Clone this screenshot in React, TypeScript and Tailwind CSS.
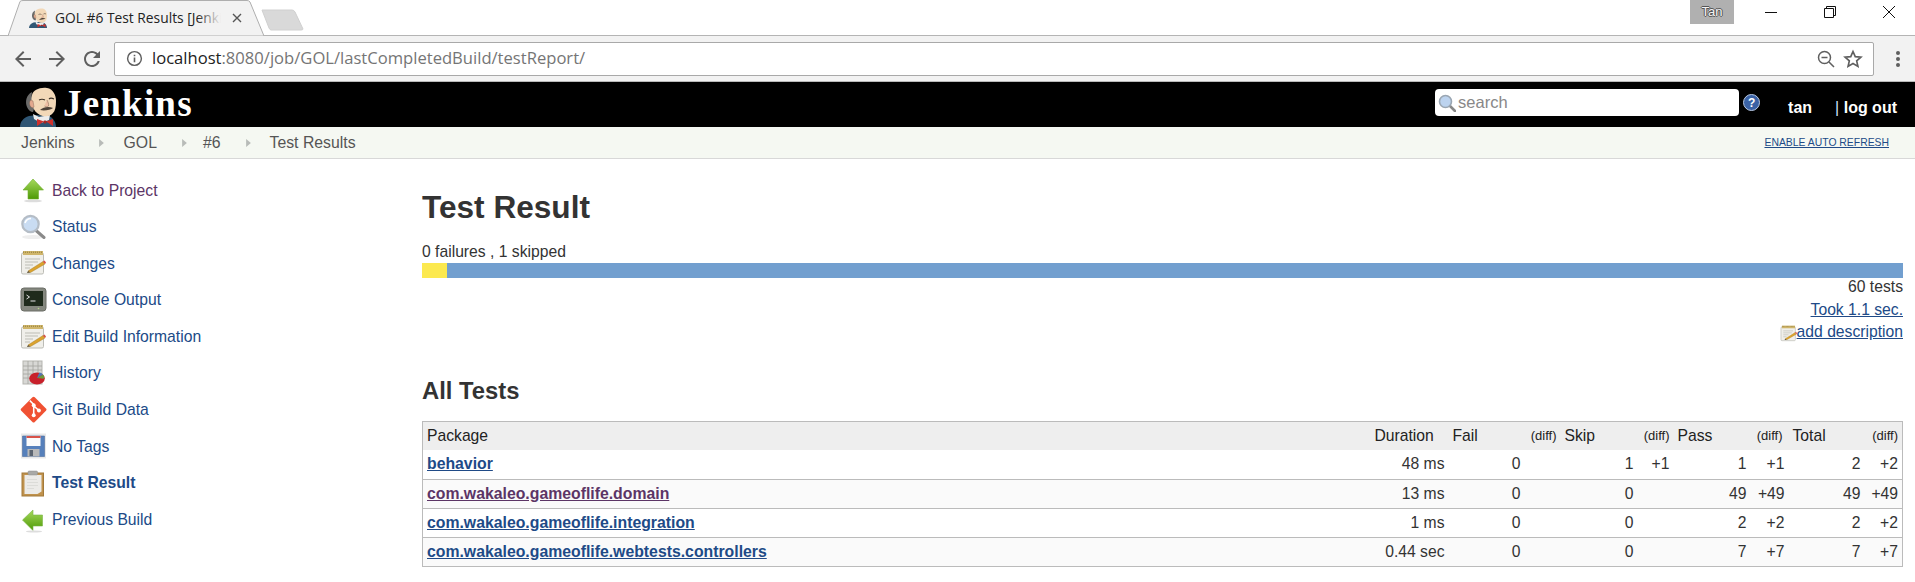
import React from "react";

const Butler = ({ className }: { className: string }) => (
  <svg viewBox="0 0 38 40" className={className}>
    <path d="M0 40c0-5 3-9 9-11l8-1 12 1c4 2 7 6 7 11z" fill="#2f5674" />
    <path d="M13 27l6 3 11-2-1 5-8 3-7-4z" fill="#ececec" />
    <path d="M12 5C6 8 5 15 7 20c1 3 4 5 6 5l2-6C12 15 11 9 12 5z" fill="#6b6b6a" />
    <path d="M12 8C13 3 20 0 27 1c6 1 9 7 9 13 0 6-1 10-3 12-3 4-9 4-13 2-4-2-6-5-7-8-2-4-2-8-1-12z" fill="#f2d8b8" />
    <path d="M11 13c-2 1-2 5 0 7 1 1 2 1 3 0l-1-6z" fill="#e3a98f" stroke="#7a5a48" strokeWidth="0.4" />
    <path d="M19 13c2-1 4-1 6 0M29 12c1-1 3-1 5 0" stroke="#3a3028" strokeWidth="1.1" fill="none" />
    <path d="M27 13c1 2 2 4 1.5 6-1 1-3 1-4 0" fill="#eebfa4" stroke="#7a5a48" strokeWidth="0.5" />
    <path d="M20 23c3-3 9-4 13-2-2 2-9 3-13 2z" fill="#4e4238" />
    <path d="M17 32l7 2.5-7 4.5zM33 32l-7 2.5 7 4.500z" fill="#d0302c" />
    <rect x="23.5" y="33.5" width="3" height="3" rx="1" fill="#a82420" />
  </svg>
);

const ArrowUp = () => (
  <svg viewBox="0 0 26 26" className="w-[26px] h-[26px]">
    <defs><linearGradient id="au" x1="0" y1="0" x2="0" y2="1"><stop offset="0" stopColor="#a6d95c" /><stop offset="1" stopColor="#4e9a06" /></linearGradient></defs>
    <path d="M13 2L23.5 13H18.5V22H8V13H3z" fill="url(#au)" stroke="#6fae2c" strokeWidth="0.6" />
    <ellipse cx="13" cy="24" rx="9" ry="1.3" fill="#ddd" />
  </svg>
);
const ArrowLeft = () => (
  <svg viewBox="0 0 26 26" className="w-[26px] h-[26px]">
    <defs><linearGradient id="al" x1="0" y1="0" x2="0" y2="1"><stop offset="0" stopColor="#a6d95c" /><stop offset="1" stopColor="#4e9a06" /></linearGradient></defs>
    <path d="M2.5 13L13 3V8H22.5V19H13V23.5z" fill="url(#al)" stroke="#7ab648" strokeWidth="0.6" />
    <ellipse cx="14" cy="24.5" rx="8" ry="1.1" fill="#ddd" />
  </svg>
);
const Magnifier = () => (
  <svg viewBox="0 0 26 26" className="w-[26px] h-[26px]">
    <ellipse cx="13" cy="23" rx="11" ry="2" fill="#eee" />
    <path d="M16 16.5L24 23.5" stroke="#8a8a8a" strokeWidth="3" strokeLinecap="round" />
    <circle cx="10.5" cy="10" r="8.2" fill="#c9dcf2" stroke="#b5bdc6" strokeWidth="2.2" />
    <path d="M5 9c1-3 3-4.5 6-4.5" stroke="#fff" strokeWidth="1.6" fill="none" />
  </svg>
);
const Notepad = ({ className = "w-[26px] h-[26px]" }: { className?: string }) => (
  <svg viewBox="0 0 26 26" className={className}>
    <rect x="1.5" y="3" width="22" height="21" rx="1.5" fill="#f0efea" stroke="#bcbcb6" />
    <rect x="3" y="1" width="20" height="4" fill="#cfb56a" />
    <path d="M3 2.2h20" stroke="#8d7a3c" strokeDasharray="1 1" />
    <path d="M5 9h15M5 12h13M5 15h8M5 18h5" stroke="#bdbdb5" />
    <path d="M8 21L23 11.5l2 2.5L10.5 22.5z" fill="#dba32e" stroke="#9b7420" strokeWidth="0.4" />
    <path d="M23 11.5l2 2.5 1-1.5-1.5-2z" fill="#d9534a" />
    <path d="M8 21l2.5 1.5L7 23z" fill="#5c4a2a" />
  </svg>
);
const Terminal = () => (
  <svg viewBox="0 0 26 26" className="w-[27px] h-[26px]">
    <rect x="0.5" y="1" width="25" height="23" rx="3" fill="#85887f" stroke="#6b6d66" />
    <rect x="3.5" y="4" width="19" height="15" fill="#1f2b1c" />
    <path d="M6 8l3 2-3 2" stroke="#e8e8e8" strokeWidth="1" fill="none" />
    <path d="M10 14h5" stroke="#e8e8e8" />
    <circle cx="18" cy="21.5" r="0.8" fill="#b5d68a" />
  </svg>
);
const History = () => (
  <svg viewBox="0 0 26 26" className="w-[26px] h-[26px]">
    <rect x="3" y="1" width="19" height="23" fill="#d8d8d5" stroke="#b5b5b0" />
    <path d="M3 6h19M3 10h19M3 14h19M3 18h19M8 1v23M13 1v23M18 1v12" stroke="#a3a3a0" strokeWidth="0.8" />
    <ellipse cx="17" cy="18.5" rx="7.8" ry="6" fill="#c8202a" />
    <path d="M17 18l6-3.5c1.5 1.5 1.5 3 .8 4.2z" fill="#6e9a3c" />
    <path d="M17 18l6-3.5c-1-1-2-1.6-3.6-1.9z" fill="#4f79b5" />
  </svg>
);
const Git = () => (
  <svg viewBox="0 0 26 26" className="w-[27px] h-[27px]">
    <path d="M12 1.2a1.6 1.6 0 0 1 2.2 0L25 12a1.6 1.6 0 0 1 0 2.2L14.2 25a1.6 1.6 0 0 1-2.2 0L1.2 14.2a1.6 1.6 0 0 1 0-2.2z" fill="#f05133" />
    <path d="M9.5 4.5l3.7 3.7v10M13.2 9.5l5 4.5" stroke="#fff" strokeWidth="1.5" fill="none" />
    <circle cx="13.2" cy="9" r="1.9" fill="#fff" />
    <circle cx="18.2" cy="14" r="1.9" fill="#fff" />
    <circle cx="13.2" cy="18.5" r="1.9" fill="#fff" />
  </svg>
);
const Floppy = () => (
  <svg viewBox="0 0 26 26" className="w-[27px] h-[26px]">
    <rect x="0.5" y="0.5" width="25" height="25" fill="#e9e9e9" />
    <path d="M2 3h22v20.5H2z" fill="#5680bb" stroke="#4a6c9e" strokeWidth="0.6" />
    <rect x="6" y="3" width="14" height="10" fill="#fbfbfb" />
    <rect x="6" y="3" width="14" height="2" fill="#d8534a" />
    <rect x="7" y="16" width="12" height="7.5" fill="#b9b9b9" />
    <rect x="9" y="17" width="3.5" height="6" fill="#5b6470" />
  </svg>
);
const Clipboard = () => (
  <svg viewBox="0 0 26 26" className="w-[26px] h-[27px]">
    <rect x="2" y="2.5" width="21.5" height="23" fill="#c0924d" stroke="#a37a3a" />
    <path d="M4.5 4.5h17v16.5l-4 2.5h-13z" fill="#ecebe8" />
    <path d="M7 9h10M7 12h11M7 15h11M7 18h7" stroke="#dcdcd8" />
    <rect x="8" y="0.5" width="9.5" height="4" rx="1" fill="#a9a9a6" stroke="#8e8e8c" strokeWidth="0.5" />
  </svg>
);

const LINK = "text-[#204a87]";

const nav: { label: string; icon: React.ReactNode; cls?: string }[] = [
  { label: "Back to Project", icon: <ArrowUp />, cls: "text-[#5c3566]" },
  { label: "Status", icon: <Magnifier /> },
  { label: "Changes", icon: <Notepad /> },
  { label: "Console Output", icon: <Terminal /> },
  { label: "Edit Build Information", icon: <Notepad /> },
  { label: "History", icon: <History /> },
  { label: "Git Build Data", icon: <Git /> },
  { label: "No Tags", icon: <Floppy /> },
  { label: "Test Result", icon: <Clipboard />, cls: "font-bold" },
  { label: "Previous Build", icon: <ArrowLeft /> },
];

const rows = [
  { name: "behavior", dur: "48 ms", fail: "0", skip: "1", skipD: "+1", pass: "1", passD: "+1", total: "2", totalD: "+2" },
  { name: "com.wakaleo.gameoflife.domain", dur: "13 ms", fail: "0", skip: "0", skipD: "", pass: "49", passD: "+49", total: "49", totalD: "+49", visited: true, alt: true },
  { name: "com.wakaleo.gameoflife.integration", dur: "1 ms", fail: "0", skip: "0", skipD: "", pass: "2", passD: "+2", total: "2", totalD: "+2" },
  { name: "com.wakaleo.gameoflife.webtests.controllers", dur: "0.44 sec", fail: "0", skip: "0", skipD: "", pass: "7", passD: "+7", total: "7", totalD: "+7", alt: true },
];

const Th = ({ children }: { children: React.ReactNode }) => (
  <th className="font-normal text-left px-[4px] text-[#222]">{children}</th>
);
const Diff = ({ wide }: { wide?: boolean }) => (
  <th className={wide ? "font-normal text-right pl-[2px] pr-[6px] text-[13px] text-[#222]" : "font-normal text-right px-[4px] text-[13px] text-[#222]"}>(diff)</th>
);
const Td = ({ children }: { children?: React.ReactNode }) => (
  <td className="text-right px-[4px] text-[#333]">{children}</td>
);

const Crumb = () => (
  <svg viewBox="0 0 6 10" className="w-[5px] h-[8px] shrink-0"><path d="M0 0l6 5-6 5z" fill="#b8bbb8" /></svg>
);

export default function App() {
  return (
    <div className="w-[1915px] h-[582px] overflow-hidden bg-white font-['Liberation_Sans',Arial,sans-serif] text-[15.7px] text-[#333]">
      {/* tab strip */}
      <div className="h-[36px] border-b border-[#b4b4b4] flex items-stretch relative">
        <div className="relative ml-[8px] w-[256px] h-[36px] flex items-center pl-[21px] shrink-0">
          <svg viewBox="0 0 256 36" className="absolute inset-0 w-[256px] h-[36px]">
            <path d="M0 36L12 1.5Q13 .5 15 .5H239Q241 .5 242 2L256 36z" fill="#f2f2f2" stroke="#aeaeae" />
          </svg>
          <Butler className="relative w-[19px] h-[20px] shrink-0" />
          <div className="relative ml-[7px] w-[166px] overflow-hidden whitespace-nowrap font-['Open_Sans',sans-serif] text-[13.8px] text-[#222]">
            GOL #6 Test Results [Jenkins]
            <div className="absolute right-0 top-0 bottom-0 w-[24px] bg-gradient-to-r from-transparent to-[#f2f2f2]" />
          </div>
          <svg viewBox="0 0 10 10" className="relative ml-[11px] w-[10px] h-[10px]"><path d="M1 1l8 8M9 1l-8 8" stroke="#555" strokeWidth="1.4" /></svg>
        </div>
        <svg viewBox="0 0 44 22" className="ml-[-3px] mt-[9px] w-[44px] h-[22px] shrink-0">
          <path d="M1 1H31Q33 1 34 3L42 20Q42 21 40 21H10Q9 21 8 19z" fill="#d9d9d9" stroke="#d0d0d0" />
        </svg>
        <div className="flex-1" />
        <div className="w-[44px] h-[24px] bg-[#b0b0b0] text-[#f4f4f4] text-[13px] flex items-center justify-center font-['Liberation_Sans',sans-serif] [text-shadow:1px_0_0_#555,-1px_0_0_#555,0_1px_0_#555,0_-1px_0_#555]">Tan</div>
        <div className="w-[181px] h-[24px] flex items-center pl-[31px] shrink-0">
          <svg viewBox="0 0 12 12" className="w-[12px] h-[12px]"><path d="M0 6.5h12" stroke="#111" /></svg>
          <svg viewBox="0 0 12 12" className="ml-[47px] w-[12px] h-[12px]"><path d="M.5 2.5h9v9h-9zM2.5 2.5v-2h9v9h-2" fill="none" stroke="#111" /></svg>
          <svg viewBox="0 0 12 12" className="ml-[47px] w-[12px] h-[12px]"><path d="M0 0l12 12M12 0L0 12" stroke="#111" /></svg>
        </div>
      </div>

      {/* toolbar */}
      <div className="h-[46px] bg-[#f2f2f2] border-b border-[#b9b9b9] flex items-center">
        <svg viewBox="0 0 24 24" className="ml-[11px] w-[24px] h-[24px]"><path fill="#5f5f5f" d="M20 11H7.83l5.59-5.59L12 4l-8 8 8 8 1.41-1.41L7.83 13H20v-2z" /></svg>
        <svg viewBox="0 0 24 24" className="ml-[10px] w-[24px] h-[24px] rotate-180"><path fill="#5f5f5f" d="M20 11H7.83l5.59-5.59L12 4l-8 8 8 8 1.41-1.41L7.83 13H20v-2z" /></svg>
        <svg viewBox="0 0 24 24" className="ml-[11px] w-[24px] h-[24px]"><path fill="#5f5f5f" d="M17.65 6.35C16.2 4.9 14.21 4 12 4c-4.42 0-7.99 3.58-7.99 8s3.57 8 7.99 8c3.73 0 6.84-2.55 7.73-6h-2.08c-.82 2.33-3.04 4-5.65 4-3.31 0-6-2.69-6-6s2.69-6 6-6c1.66 0 3.14.69 4.22 1.78L13 11h7V4l-2.35 2.35z" /></svg>
        <div className="ml-[10px] w-[1760px] h-[34px] bg-white border border-[#a9a9a9] rounded-[2px] flex items-center pl-[11px] pr-[10px] font-['Open_Sans',sans-serif]">
          <svg viewBox="0 0 18 18" className="w-[17px] h-[17px] shrink-0"><circle cx="9" cy="9" r="7.3" fill="none" stroke="#5f5f5f" strokeWidth="1.5" /><path d="M9 8v5M9 5v1.6" stroke="#5f5f5f" strokeWidth="1.7" /></svg>
          <span className="ml-[9px] text-[16.6px] text-[#222]">localhost<span className="text-[#757575]">:8080/job/GOL/lastCompletedBuild/testReport/</span></span>
          <div className="flex-1" />
          <svg viewBox="0 0 18 18" className="w-[18px] h-[18px]"><circle cx="7.5" cy="7.5" r="6" fill="none" stroke="#5f5f5f" strokeWidth="1.5" /><path d="M4.5 7.5h6M12 12l5 5" stroke="#5f5f5f" strokeWidth="1.5" /></svg>
          <svg viewBox="0 0 24 24" className="ml-[8px] w-[20px] h-[20px]"><path d="M12 3l2.7 6.2 6.8.6-5.1 4.5 1.5 6.6L12 17.4l-5.9 3.5 1.5-6.6L2.5 9.8l6.8-.6z" fill="none" stroke="#5f5f5f" strokeWidth="2" /></svg>
        </div>
        <svg viewBox="0 0 4 16" className="ml-[22px] w-[4px] h-[16px]"><circle cx="2" cy="2" r="2" fill="#5f5f5f" /><circle cx="2" cy="8" r="2" fill="#5f5f5f" /><circle cx="2" cy="14" r="2" fill="#5f5f5f" /></svg>
      </div>

      {/* Jenkins header */}
      <div className="h-[45px] bg-black flex items-end">
        <Butler className="ml-[20px] w-[38px] h-[40px] shrink-0" />
        <div className="self-center ml-[5px] mt-[-2px] font-['Liberation_Serif',serif] font-bold text-white text-[37px] tracking-[1.2px] leading-none">Jenkins</div>
        <div className="flex-1" />
        <div className="self-center w-[304px] h-[27px] mb-[4px] bg-white rounded-[4px] flex items-center pl-[3px] text-[16.5px] text-[#888]">
          <svg viewBox="0 0 18 18" className="w-[18px] h-[18px] shrink-0"><path d="M11 11l6 6" stroke="#888" strokeWidth="2.6" strokeLinecap="round" /><circle cx="7.5" cy="7.5" r="6" fill="#bcd3ef" stroke="#9aa6b2" strokeWidth="1.6" /></svg>
          <span className="ml-[2px]">search</span>
        </div>
        <div className="self-center mb-[4px] ml-[4px] w-[17px] h-[17px] rounded-full bg-[#3a62a5] border border-[#b9c9e3] text-white text-[12px] font-bold flex items-center justify-center">?</div>
        <div className="self-center mt-[6px] ml-[28px] font-bold text-white text-[16px]">tan</div>
        <div className="self-center mt-[6px] ml-[23px] mr-[18px] font-bold text-white text-[16px] whitespace-nowrap"><span className="font-normal text-[#cfe3ff]">|</span> log out</div>
      </div>

      {/* breadcrumbs */}
      <div className="h-[32px] bg-[#f5f8f2] border-b border-[#d8d8d8] flex items-center pl-[21px] text-[#555] text-[15.8px]">
        <span>Jenkins</span>
        <span className="ml-[24px]"><Crumb /></span>
        <span className="ml-[20px]">GOL</span>
        <span className="ml-[25px]"><Crumb /></span>
        <span className="ml-[16px]">#6</span>
        <span className="ml-[25px]"><Crumb /></span>
        <span className="ml-[19px]">Test Results</span>
        <div className="flex-1" />
        <span className={`mr-[26px] text-[10.4px] underline ${LINK}`}>ENABLE AUTO REFRESH</span>
      </div>

      {/* body */}
      <div className="flex">
        <div className="w-[422px] shrink-0 pt-[13px] pl-[20px]">
          {nav.map((n) => (
            <div key={n.label} className="h-[36.6px] flex items-center">
              <span className="w-[32px] shrink-0 flex items-center">{n.icon}</span>
              <span className={`${n.cls ?? ""} ${n.cls?.includes("text-") ? "" : LINK}`}>{n.label}</span>
            </div>
          ))}
        </div>
        <div className="flex-1 pr-[12px]">
          <h1 className="mt-[29px] font-bold text-[31.6px] leading-[38px] text-[#333]">Test Result</h1>
          <div className="mt-[14px] leading-[23px]">0 failures , 1 skipped</div>
          <div className="h-[15px] bg-[#729fcf] flex"><div className="w-[25px] bg-[#fce94f]" /></div>
          <div className="text-right leading-[22.5px] mt-[-2px]">
            <div>60 tests</div>
            <div className={`underline ${LINK}`}>Took 1.1 sec.</div>
            <div className="flex justify-end items-center">
              <Notepad className="w-[17px] h-[17px] mt-[2px]" />
              <span className={`underline ${LINK}`}>add description</span>
            </div>
          </div>
          <h2 className="mt-[33px] font-bold text-[23.8px] leading-[28px] text-[#333]">All Tests</h2>
          <table className="mt-[16px] w-full table-fixed border-collapse border border-[#bbb] text-[15.7px]">
            <colgroup>
              <col />
              <col className="w-[78px]" />
              <col className="w-[76px]" />
              <col className="w-[36px]" />
              <col className="w-[77px]" />
              <col className="w-[36px]" />
              <col className="w-[77px]" />
              <col className="w-[38px]" />
              <col className="w-[76px]" />
              <col className="w-[38px]" />
            </colgroup>
            <thead>
              <tr className="h-[29px] bg-[#eeeeee]">
                <Th>Package</Th>
                <Th>Duration</Th>
                <Th>Fail</Th>
                <Diff />
                <Th>Skip</Th>
                <Diff />
                <Th>Pass</Th>
                <Diff wide />
                <Th>Total</Th>
                <Diff />
              </tr>
            </thead>
            <tbody>
              {rows.map((r) => (
                <tr key={r.name} className={`h-[29px] border-b border-[#bbb] ${r.alt ? "bg-[#fafafa]" : "bg-white"}`}>
                  <td className={`px-[4px] font-bold underline text-[15.8px] ${r.visited ? "text-[#5c3566]" : LINK}`}>{r.name}</td>
                  <Td>{r.dur}</Td>
                  <Td>{r.fail}</Td>
                  <Td />
                  <Td>{r.skip}</Td>
                  <Td>{r.skipD}</Td>
                  <Td>{r.pass}</Td>
                  <Td>{r.passD}</Td>
                  <Td>{r.total}</Td>
                  <Td>{r.totalD}</Td>
                </tr>
              ))}
            </tbody>
          </table>
        </div>
      </div>
    </div>
  );
}
